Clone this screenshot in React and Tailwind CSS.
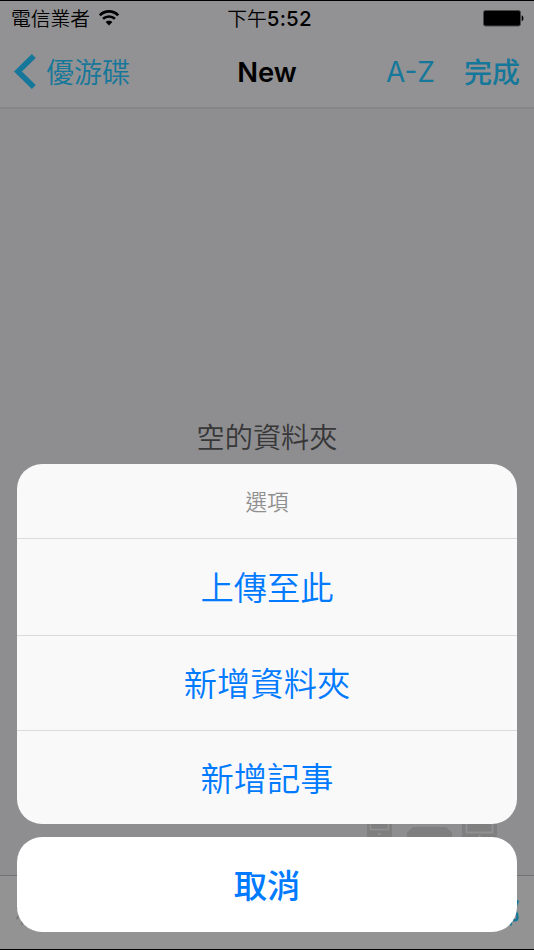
const actions = [
  { label: "上傳至此", size: "h-[97px] pt-[3px]" },
  { label: "新增資料夾", size: "h-[95px] pt-[4px]" },
  { label: "新增記事", size: "h-[94px] pt-[4px]" },
];

function StatusBar() {
  return (
    <div className="relative flex h-[34px] items-center justify-between pl-[11px] pr-[10px] text-[19.8px] text-black">
      <div className="flex items-center gap-[9px]">
        <span className="pt-[3px] font-[350]">電信業者</span>
        <WifiIcon />
      </div>
      <span className="absolute inset-x-0 pl-[5px] pt-[3px] text-center font-[350]">
        下午<span className="text-[20.5px] font-medium tracking-[0.2px]">5:52</span>
      </span>
      <BatteryIcon />
    </div>
  );
}

function WifiIcon() {
  return (
    <svg width="20" height="16" viewBox="0 0 20 16" fill="none" stroke="#000" strokeWidth="2.6">
      <path d="M0.8 5.3C6 0.1 14 0.1 19.2 5.3" />
      <path d="M4 8.8C7.4 5.7 12.6 5.7 16 8.8" />
      <path d="M10 15.6L6.6 12.1C8.4 10.2 11.6 10.2 13.4 12.1Z" fill="#000" stroke="none" />
    </svg>
  );
}

function BatteryIcon() {
  return (
    <svg width="41" height="17" viewBox="0 0 41 17">
      <rect x="0.5" y="0.5" width="37" height="15.5" rx="2" fill="#000" stroke="#4a4a4b" />
      <path d="M38.7 5.3C41 6 41 10.7 38.7 11.3Z" fill="#000" />
    </svg>
  );
}

function NavBar() {
  return (
    <div className="relative flex h-[72px] items-center justify-between px-[14px] text-[28px] text-[#15779a]">
      <div className="flex items-center gap-[10px]">
        <svg width="22" height="35" viewBox="0 0 22 35" fill="none" stroke="currentColor" strokeWidth="5.6">
          <path d="M19.8 2L3.9 17.5L19.8 33" />
        </svg>
        <span className="pt-[3px] font-[350]">優游碟</span>
      </div>
      <h1 className="absolute left-1/2 -translate-x-1/2 pt-[3px] text-[27.4px] font-semibold text-black">New</h1>
      <div className="flex items-center gap-[29px]">
        <span className="pt-[2px]">A-Z</span>
        <span className="pt-[3px] font-medium">完成</span>
      </div>
    </div>
  );
}

// Faint device outlines along the bottom of the empty folder view
function Devices() {
  return (
    <svg className="mb-[31px] mr-[36px] self-end" width="132" height="24" viewBox="0 0 132 24" fill="#7f7f80">
      <rect x="1" width="25" height="24" />
      <path d="M4.5 0V9.5H22.5V0" stroke="#919193" strokeWidth="1.4" />
      <circle cx="13.3" cy="14" r="1.3" fill="#919193" />
      <path d="M41 17V12.5L47 7H80L86 12.5V17Z" />
      <rect x="96" width="35" height="24" />
      <path d="M100.5 0V12.5H126.5V0" stroke="#919193" strokeWidth="1.8" />
      <circle cx="113.5" cy="16" r="1.2" fill="#919193" />
    </svg>
  );
}

function ActionSheet() {
  return (
    <div className="absolute inset-x-[17px] bottom-[17px] flex flex-col gap-[13px] text-center text-[33.3px] text-[#007aff]">
      <div className="overflow-hidden rounded-[25px] bg-[#f9f9f9]">
        <div className="flex h-[74px] items-center justify-center pt-[3px] text-[21.5px] font-[350] text-[#8f8f8f]">
          選項
        </div>
        {actions.map(({ label, size }) => (
          <button
            key={label}
            className={`flex w-full items-center justify-center border-t border-[#dbdbdb] font-[350] ${size}`}
          >
            {label}
          </button>
        ))}
      </div>
      <button className="h-[95px] rounded-[25px] bg-white pt-[4px] font-medium">取消</button>
    </div>
  );
}

export default function App() {
  return (
    <div className="relative flex h-[950px] w-[534px] flex-col overflow-hidden border-y border-black bg-[#8e8e91] font-['Inter','Noto_Sans_CJK_TC',sans-serif]">
      <header className="border-b-2 border-[#868689] bg-[#929294]">
        <StatusBar />
        <NavBar />
      </header>
      <main className="flex flex-1 flex-col">
        <p className="mt-[308px] text-center text-[28.2px] font-[350] leading-[42px] text-[#373738]">空的資料夾</p>
        <div className="flex flex-1 justify-end">
          <Devices />
        </div>
      </main>
      <footer className="flex h-[74px] items-center justify-between border-t border-[#727273] bg-[#939393] pl-[15px] pr-[14px] text-[28px]">
        <span className="font-light text-[#747476]">移動</span>
        <span className="font-medium text-[#15779a]">全部</span>
      </footer>
      <ActionSheet />
    </div>
  );
}
